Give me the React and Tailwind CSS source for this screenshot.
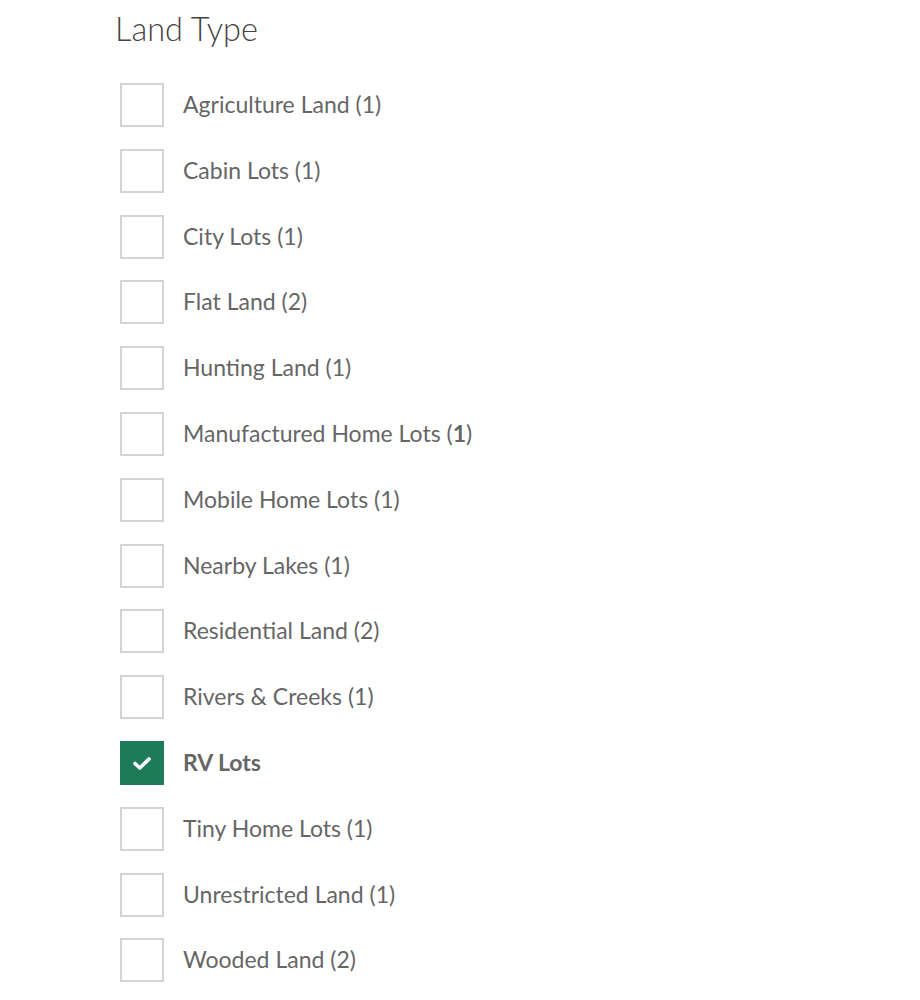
import React from "react";

const items = [
  ["Agriculture Land", "1"],
  ["Cabin Lots", "1"],
  ["City Lots", "1"],
  ["Flat Land", "2"],
  ["Hunting Land", "1"],
  ["Manufactured Home Lots", "1", true],
  ["Mobile Home Lots", "1"],
  ["Nearby Lakes", "1"],
  ["Residential Land", "2"],
  ["Rivers & Creeks", "1"],
  ["RV Lots", null],
  ["Tiny Home Lots", "1"],
  ["Unrestricted Land", "1"],
  ["Wooded Land", "2"],
];

export default function App() {
  return (
    <div className="min-h-screen bg-white pl-[115px] pt-[7px]" style={{ fontFamily: "Lato, 'Open Sans', sans-serif" }}>
      <h2 className="text-[32.5px] font-light text-[#444] leading-[44px]">Land Type</h2>
      <ul className="mt-[32px] flex flex-col gap-[21.8px] pl-[5px]">
        {items.map(([label, count, boldCount]) => {
          const checked = count === null;
          return (
            <li key={label} className="flex items-center gap-[19px] h-[44px]">
              {checked ? (
                <span className="w-[44px] h-[44px] bg-[#1d7b5a] flex items-center justify-center">
                  <svg width="22" height="18" viewBox="0 0 22 18">
                    <path d="M4 9.5 L8.8 14 L18 5" fill="none" stroke="white" strokeWidth="3.6" strokeLinecap="round" strokeLinejoin="round" />
                  </svg>
                </span>
              ) : (
                <span className="w-[44px] h-[44px] border-2 border-[#d4d4d4] bg-white" />
              )}
              <span className={`text-[23px] leading-[30px] -mt-[2px] text-[#666] ${checked ? "font-bold" : ""}`}>
                {label}
                {count && (
                  <>
                    {" ("}
                    <span className={boldCount ? "font-bold" : ""}>{count}</span>
                    {")"}
                  </>
                )}
              </span>
            </li>
          );
        })}
      </ul>
    </div>
  );
}
